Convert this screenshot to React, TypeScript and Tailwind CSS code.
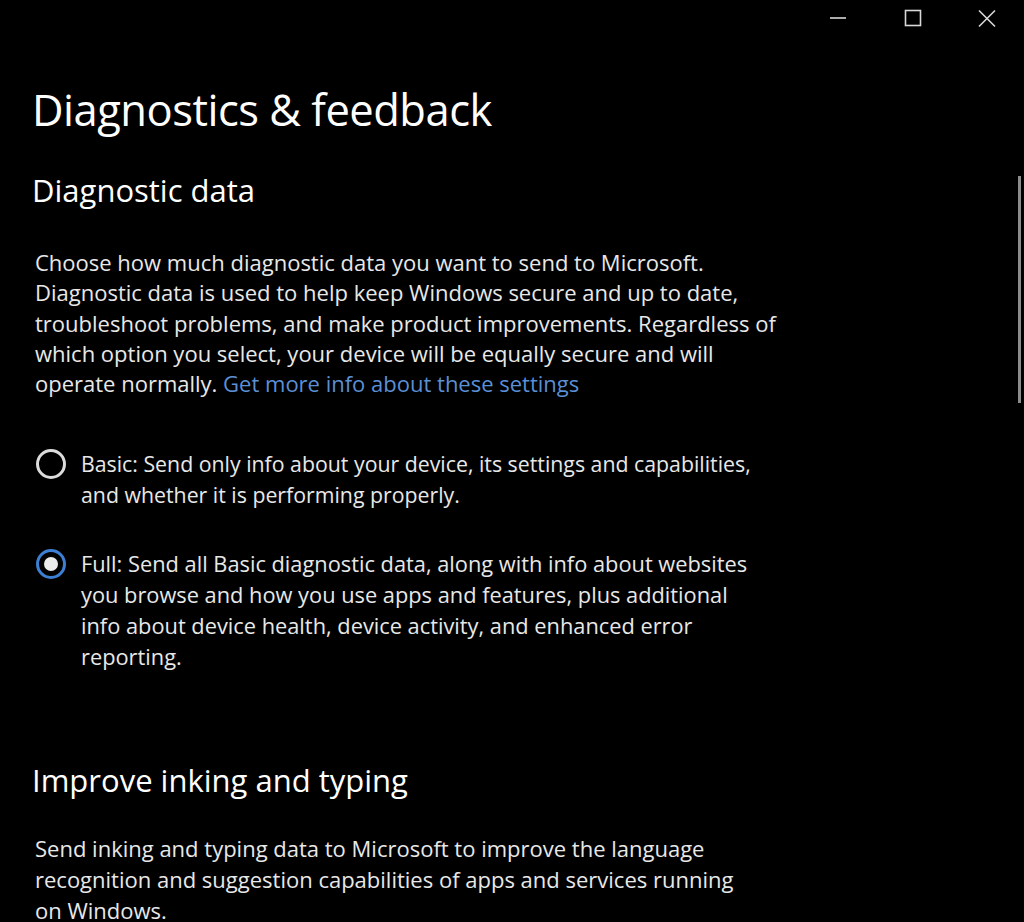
import React from 'react';

const font = { fontFamily: '"Open Sans", "Noto Sans", sans-serif' };

function Radio({ checked }: { checked?: boolean }) {
  if (checked) {
    return (
      <div className="flex h-[30px] w-[30px] flex-shrink-0 items-center justify-center rounded-full border-[3px] border-[#3d7fd4]">
        <div className="h-[14px] w-[14px] rounded-full bg-[#ececec]" />
      </div>
    );
  }
  return <div className="h-[30px] w-[30px] flex-shrink-0 rounded-full border-[3px] border-[#dcdcdc]" />;
}

export default function App() {
  return (
    <div className="relative h-[922px] w-[1024px] overflow-hidden bg-black text-[#e8e8e8]" style={font}>
      {/* ── Title bar ─────────────────────────────────────────── */}
      <div className="flex h-[38px] justify-end">
        <button className="flex w-[75px] items-center justify-center">
          <svg width="20" height="20" viewBox="0 0 20 20">
            <path d="M2 9h16" stroke="#d8d8d8" strokeWidth="1.6" />
          </svg>
        </button>
        <button className="flex w-[75px] items-center justify-center">
          <svg width="20" height="20" viewBox="0 0 20 20">
            <rect x="2.5" y="1.5" width="15" height="15" fill="none" stroke="#d8d8d8" strokeWidth="1.6" />
          </svg>
        </button>
        <button className="flex w-[74px] items-center justify-center">
          <svg width="20" height="20" viewBox="0 0 20 20">
            <path d="M2 1.5l16 16M18 1.5l-16 16" stroke="#d8d8d8" strokeWidth="1.6" />
          </svg>
        </button>
      </div>

      {/* ── Page ──────────────────────────────────────────────── */}
      <div className="pl-[32px]">
        <h1 className="mt-[44px] text-[43.5px] leading-[56px] font-normal tracking-[-0.5px] text-white">
          Diagnostics &amp; feedback
        </h1>

        <h2 className="mt-[32px] text-[31px] leading-[40px] font-normal text-white">Diagnostic data</h2>

        <p className="mt-[37px] whitespace-nowrap pl-[3px] text-[22px] leading-[30.25px]">
          Choose how much diagnostic data you want to send to Microsoft.
          <br />
          Diagnostic data is used to help keep Windows secure and up to date,
          <br />
          troubleshoot problems, and make product improvements. Regardless of
          <br />
          which option you select, your device will be equally secure and will
          <br />
          operate normally. <a className="text-[#5b8fd6]">Get more info about these settings</a>
        </p>

        <div className="mt-[51px] flex items-start gap-[15px] pl-[4px]">
          <Radio />
          <p className="whitespace-nowrap text-[21.3px] leading-[30.5px]">
            Basic: Send only info about your device, its settings and capabilities,
            <br />
            and whether it is performing properly.
          </p>
        </div>

        <div className="mt-[39px] flex items-start gap-[15px] pl-[4px]">
          <Radio checked />
          <p className="whitespace-nowrap text-[21.8px] leading-[30.75px]">
            Full: Send all Basic diagnostic data, along with info about websites
            <br />
            you browse and how you use apps and features, plus additional
            <br />
            info about device health, device activity, and enhanced error
            <br />
            reporting.
          </p>
        </div>

        <h2 className="mt-[88px] text-[31px] leading-[40px] font-normal text-white">Improve inking and typing</h2>

        <p className="mt-[33px] whitespace-nowrap pl-[3px] text-[22px] leading-[31px]">
          Send inking and typing data to Microsoft to improve the language
          <br />
          recognition and suggestion capabilities of apps and services running
          <br />
          on Windows.
        </p>
      </div>

      {/* scrollbar thumb */}
      <div className="absolute left-[1018px] top-[176px] h-[227px] w-[3px] bg-[#8c8c8c]" />
    </div>
  );
}
